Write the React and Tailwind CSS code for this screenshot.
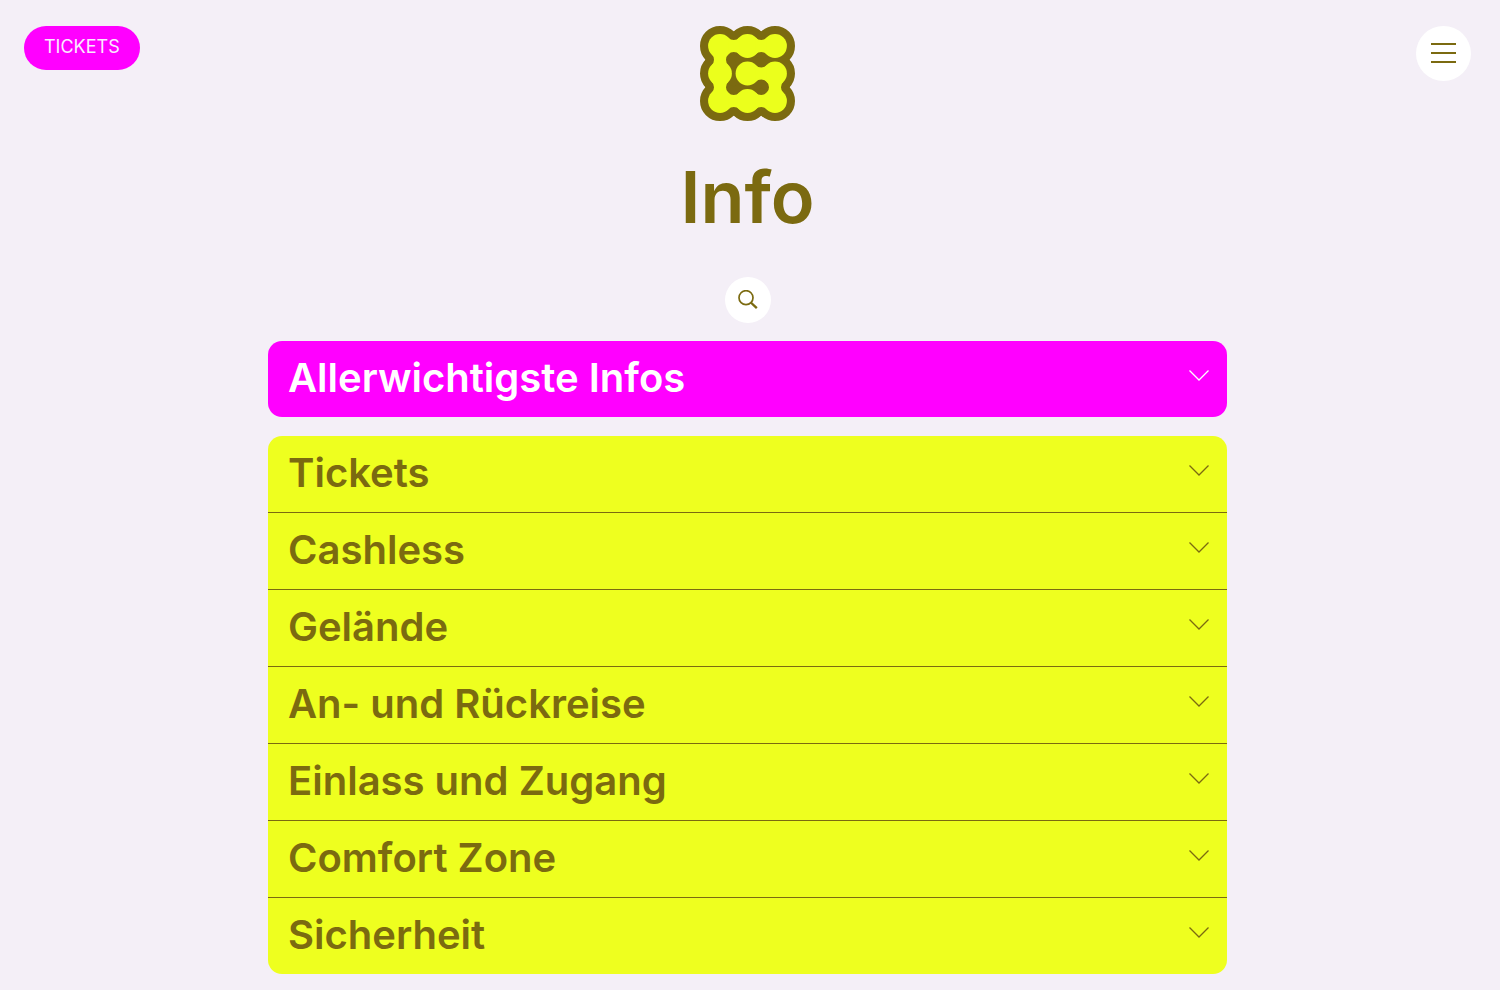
import React, { useState } from "react";

const sections = [
  "Tickets",
  "Cashless",
  "Gelände",
  "An- und Rückreise",
  "Einlass und Zugang",
  "Comfort Zone",
  "Sicherheit",
];

/* ===========================
   LOGO
============================ */
// the dots of the "G", in drawing order
const dots = [
  [75, 20],
  [47.5, 20],
  [20, 20],
  [20, 47.5],
  [20, 75],
  [47.5, 75],
  [75, 75],
  [75, 47.5],
  [47.5, 47.5],
];

// concave neck that joins two neighbouring dots, drawn round its middle
const neck =
  "M-5.48 -8.27A7.75 7.75 0 0 0 5.48 -8.27V8.27A7.75 7.75 0 0 0 -5.48 8.27Z";

const LogoShape = () => (
  <>
    {dots.map(([x, y]) => (
      <circle key={`${x}-${y}`} cx={x} cy={y} r="11.9" />
    ))}
    {dots.slice(1).map(([x, y], i) => {
      const [px, py] = dots[i];
      const angle = px === x ? 90 : 0;
      return (
        <path
          key={i}
          d={neck}
          transform={`translate(${(px + x) / 2} ${(py + y) / 2}) rotate(${angle})`}
        />
      );
    })}
  </>
);

const Logo = () => (
  <svg viewBox="0 0 95 95" className="size-[95px]" aria-hidden="true">
    <g fill="#7b6a10" stroke="#7b6a10" strokeWidth="16.2" strokeLinejoin="round">
      <LogoShape />
    </g>
    <g fill="#ebff1c">
      <LogoShape />
    </g>
  </svg>
);

const Chevron = ({ open }) => (
  <svg
    viewBox="0 0 20 16"
    className={`h-4 w-5 shrink-0 ${open ? "-scale-y-100" : ""}`}
    fill="none"
    stroke="currentColor"
    strokeWidth="1.3"
    aria-hidden="true"
  >
    <path d="M0.5 0.5L10 10L19.5 0.5" />
  </svg>
);

const AccordionRow = ({ title, open, onToggle }) => (
  <button
    type="button"
    aria-expanded={open}
    onClick={onToggle}
    className="flex h-[76px] w-full items-center justify-between pb-[2px] pl-5 pr-[18px] text-left text-[40px] leading-[56px] font-semibold"
  >
    {title}
    <Chevron open={open} />
  </button>
);

const App = () => {
  const [openSection, setOpenSection] = useState(null);

  const toggle = (title) =>
    setOpenSection(openSection === title ? null : title);

  return (
    <div className="min-h-screen bg-[#f4eff7] pr-[5px] pb-4 font-['Inter',sans-serif] text-[#7b6a10]">
      {/* HEADER */}
      <header className="grid grid-cols-[1fr_auto_1fr] items-start px-6 pt-[26px]">
        <a
          href="#tickets"
          className="flex h-11 items-center justify-self-start rounded-full bg-[#ff00ff] px-5 pb-[2px] text-lg leading-6 text-[#fbeaff]"
        >
          TICKETS
        </a>

        <a href="#home" aria-label="Home">
          <Logo />
        </a>

        <button
          type="button"
          aria-label="Menü"
          className="flex size-[55px] flex-col items-center justify-center gap-[7px] justify-self-end rounded-full bg-white pb-[2px]"
        >
          <span className="h-[2px] w-[25px] bg-[#7b6a10]" />
          <span className="h-[2px] w-[25px] bg-[#7b6a10]" />
          <span className="h-[2px] w-[25px] bg-[#7b6a10]" />
        </button>
      </header>

      <main className="mx-auto flex w-full max-w-[959px] flex-col items-center">
        <h1 className="mt-9 text-[72px] leading-[80px] font-semibold">
          Info
        </h1>

        <button
          type="button"
          aria-label="Suche"
          className="mt-10 flex size-[46px] items-center justify-center rounded-full bg-white"
        >
          <svg
            viewBox="0 0 20 20"
            className="size-5"
            fill="none"
            stroke="currentColor"
            aria-hidden="true"
          >
            <circle cx="8" cy="7.7" r="7" strokeWidth="1.7" />
            <path d="M12.8 12.5L18.8 18.2" strokeWidth="2.4" />
          </svg>
        </button>

        {/* HIGHLIGHT */}
        <section className="mt-[18px] w-full rounded-[14px] bg-[#ff00ff] text-white">
          <AccordionRow
            title="Allerwichtigste Infos"
            open={openSection === "Allerwichtigste Infos"}
            onToggle={() => toggle("Allerwichtigste Infos")}
          />
        </section>

        {/* SECTIONS */}
        <section className="mt-[19px] w-full divide-y divide-[#7b6a10] rounded-[14px] bg-[#eeff1f]">
          {sections.map((title) => (
            <div key={title}>
              <AccordionRow
                title={title}
                open={openSection === title}
                onToggle={() => toggle(title)}
              />
            </div>
          ))}
        </section>
      </main>
    </div>
  );
};

export default App;
